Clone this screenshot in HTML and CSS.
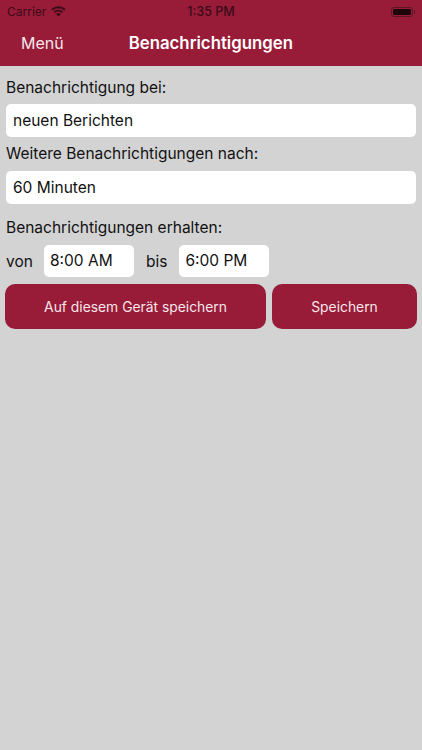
FILE: index.html
```html
<!DOCTYPE html>
<html lang="de">
<head>
    <meta charset="UTF-8">
    <meta name="viewport" content="width=device-width, initial-scale=1.0">
    <title>Benachrichtigungen</title>
    <link rel="stylesheet" href="styles.css">
</head>
<body>
    <!-- Statusbar + Navbar -->
    <header class="header">
        <div class="statusbar">
            <div class="status-left">
                <span>Carrier</span>
                <svg class="wifi" viewBox="0 0 16 12" width="15" height="11">
                    <path d="M8 11.5 5.6 8.9a3.4 3.4 0 0 1 4.8 0z" fill="#3a0c18"/>
                    <path d="M4.3 7.6 2.9 6.1a7.3 7.3 0 0 1 10.2 0l-1.4 1.5a5.2 5.2 0 0 0-7.4 0z" fill="#3a0c18"/>
                    <path d="M1.7 4.9.3 3.4a11 11 0 0 1 15.4 0l-1.4 1.5a9 9 0 0 0-12.6 0z" fill="#3a0c18"/>
                </svg>
            </div>
            <div class="status-time">1:35 PM</div>
            <div class="status-right">
                <div class="battery"><div class="battery-level"></div></div>
                <div class="battery-cap"></div>
            </div>
        </div>
        <nav class="navbar">
            <a class="nav-back" href="#menu">Menü</a>
            <div class="nav-title">Benachrichtigungen</div>
        </nav>
    </header>

    <!-- Formular -->
    <main class="form">
        <div class="label label-first">Benachrichtigung bei:</div>
        <div class="field">neuen Berichten</div>
        <div class="label label-second">Weitere Benachrichtigungen nach:</div>
        <div class="field">60 Minuten</div>
        <div class="label label-third">Benachrichtigungen erhalten:</div>

        <div class="time-row">
            <span class="time-label">von</span>
            <div class="field time-field">8:00 AM</div>
            <span class="time-label time-label-to">bis</span>
            <div class="field time-field">6:00 PM</div>
        </div>

        <div class="buttons">
            <button class="btn btn-device">Auf diesem Gerät speichern</button>
            <button class="btn btn-save">Speichern</button>
        </div>
    </main>
</body>
</html>
```

FILE: styles.css
```css
* {
    margin: 0;
    padding: 0;
    box-sizing: border-box;
    font-family: 'Inter', 'Liberation Sans', sans-serif;
}

body {
    background: #d3d3d3;
    color: #111;
    height: 750px;
    overflow: hidden;
}

/* Header */
.header {
    background: #981b38;
    height: 66px;
}

.statusbar {
    height: 22px;
    padding: 1px 7px 0;
    display: flex;
    justify-content: space-between;
    align-items: center;
    color: #3a0c18;
    font-size: 12px;
}

.status-left {
    flex: 1;
    display: flex;
    align-items: center;
    gap: 5px;
}

.status-time {
    font-weight: 500;
    font-size: 12.5px;
}

.status-right {
    flex: 1;
    display: flex;
    justify-content: flex-end;
    align-items: center;
}

.battery {
    width: 22px;
    height: 10px;
    border: 1px solid #5f1526;
    border-radius: 3px;
    padding: 1px;
}

.battery-level {
    height: 100%;
    background: #1d060c;
    border-radius: 1.5px;
}

.battery-cap {
    width: 1.5px;
    height: 4px;
    background: #5f1526;
    margin-left: 1px;
}

.navbar {
    height: 44px;
    display: flex;
    align-items: center;
    color: #fff;
    padding-bottom: 2px;
}

.nav-back {
    color: #f6e6ea;
    text-decoration: none;
    font-size: 16px;
    margin-left: 21px;
}

.nav-title {
    font-size: 16.8px;
    font-weight: 600;
    margin-left: 65px;
}

/* Formular */
.form {
    padding: 0 5px;
}

.label {
    font-size: 15.5px;
    line-height: 20px;
    padding-left: 1px;
}

.label-first {
    margin-top: 12px;
}

.label-second {
    margin-top: 7px;
}

.label-third {
    margin-top: 14px;
}

.field {
    background: #fff;
    border-radius: 5px;
    height: 33px;
    line-height: 33px;
    padding-left: 7px;
    font-size: 15.5px;
    margin-top: 6px;
    margin-left: 1px;
    margin-right: 1px;
}

.label-second + .field {
    margin-top: 7px;
}

/* Horario */
.time-row {
    display: flex;
    align-items: center;
    margin-top: 7px;
}

.time-label {
    font-size: 15.5px;
    padding-left: 1px;
    width: 39px;
}

.time-label-to {
    width: auto;
    margin-left: 11px;
    margin-right: 12px;
}

.time-field {
    width: 90px;
    height: 32px;
    line-height: 32px;
    padding-left: 6px;
    margin: 0;
}

/* Botoes */
.buttons {
    display: flex;
    gap: 6px;
    margin-top: 7px;
}

.btn {
    background: #981b38;
    color: #f6e6ea;
    border: none;
    border-radius: 10px;
    height: 45px;
    font-size: 13.85px;
}

.btn-device {
    width: 261px;
}

.btn-save {
    width: 145px;
}
```
